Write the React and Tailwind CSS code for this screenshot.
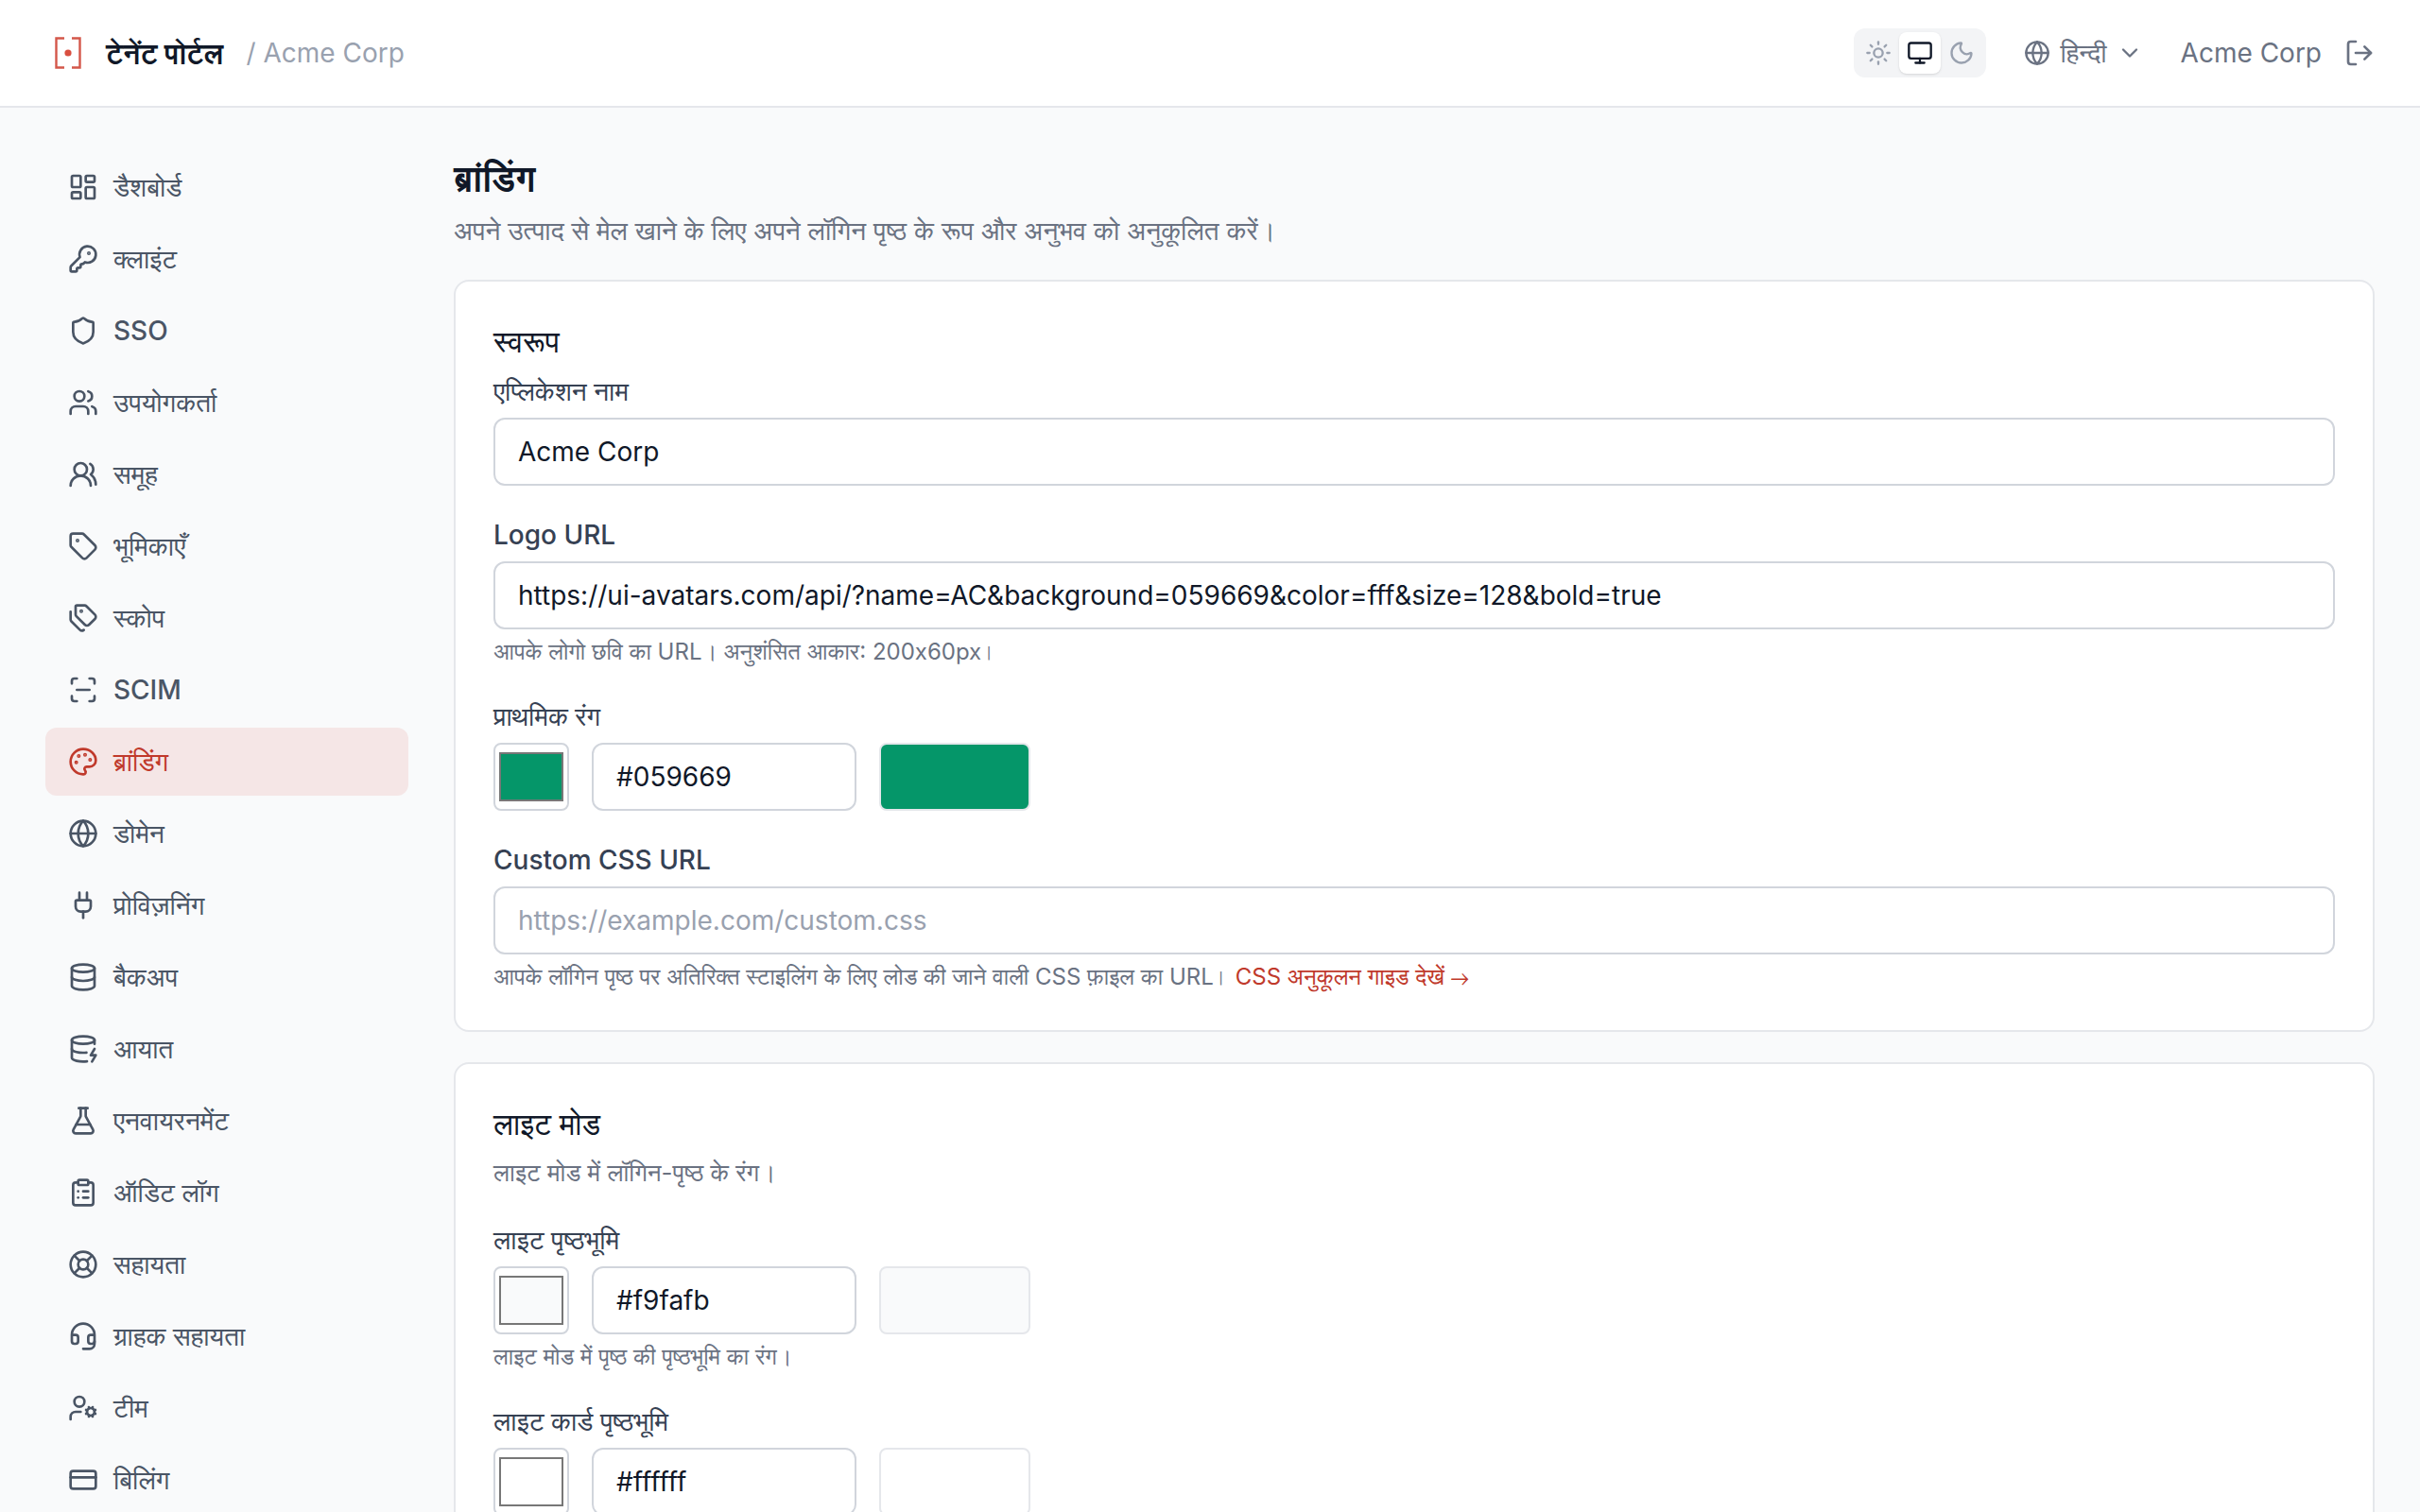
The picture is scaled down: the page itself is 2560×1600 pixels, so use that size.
import { useState } from "react";
import {
  ChevronDown,
  ClipboardList,
  CreditCard,
  Database,
  DatabaseZap,
  FlaskConical,
  Globe,
  Headset,
  KeyRound,
  LayoutDashboard,
  LifeBuoy,
  LogOut,
  Monitor,
  Moon,
  Palette,
  Plug,
  ScanLine,
  Shield,
  Sun,
  Tag,
  Tags,
  UserCog,
  Users,
  UsersRound,
} from "lucide-react";

const NAV = [
  { label: "डैशबोर्ड", icon: LayoutDashboard },
  { label: "क्लाइंट", icon: KeyRound },
  { label: "SSO", icon: Shield },
  { label: "उपयोगकर्ता", icon: Users },
  { label: "समूह", icon: UsersRound },
  { label: "भूमिकाएँ", icon: Tag },
  { label: "स्कोप", icon: Tags },
  { label: "SCIM", icon: ScanLine },
  { label: "ब्रांडिंग", icon: Palette },
  { label: "डोमेन", icon: Globe },
  { label: "प्रोविज़निंग", icon: Plug },
  { label: "बैकअप", icon: Database },
  { label: "आयात", icon: DatabaseZap },
  { label: "एनवायरनमेंट", icon: FlaskConical },
  { label: "ऑडिट लॉग", icon: ClipboardList },
  { label: "सहायता", icon: LifeBuoy },
  { label: "ग्राहक सहायता", icon: Headset },
  { label: "टीम", icon: UserCog },
  { label: "बिलिंग", icon: CreditCard },
];

const THEMES = [
  { id: "light", icon: Sun },
  { id: "system", icon: Monitor },
  { id: "dark", icon: Moon },
];

function Logo() {
  return (
    <svg viewBox="0 0 32 36" className="h-9 w-8" fill="none">
      <path d="M12 2.500H3.500v31H12M20 2.500h8.500v31H20" stroke="#d4574a" strokeWidth="2.400" />
      <circle cx="16" cy="18" r="3.600" fill="#d94f40" />
    </svg>
  );
}

function Header() {
  const [theme, setTheme] = useState("system");

  return (
    <header className="flex h-[114px] shrink-0 items-center justify-between border-b-2 border-gray-200 bg-white px-12">
      <div className="flex items-center">
        <div className="flex items-center gap-6 pl-2">
          <Logo />
          <span className="text-3xl leading-12 font-bold text-gray-900">टेनेंट पोर्टल</span>
        </div>
        <span className="pl-6 text-[28px] leading-10 text-gray-400">/ Acme Corp</span>
      </div>

      <div className="flex items-center">
        <div className="flex rounded-xl bg-gray-100 p-1">
          {THEMES.map(({ id, icon: Icon }) => (
            <button
              key={id}
              aria-label={id}
              onClick={() => setTheme(id)}
              className={
                theme === id
                  ? "rounded-lg bg-white p-2 text-gray-900 shadow-sm"
                  : "rounded-lg p-2 text-gray-400"
              }
            >
              <Icon size={28} />
            </button>
          ))}
        </div>
        <button className="ml-10 flex items-center gap-2.5 text-[28px] leading-10 text-gray-500">
          <Globe size={28} />
          <span>हिन्दी</span>
          <ChevronDown size={28} />
        </button>
        <span className="ml-10 text-[28px] leading-10 text-gray-500">Acme Corp</span>
        <button aria-label="लॉग आउट" className="ml-6 text-gray-500">
          <LogOut size={32} />
        </button>
      </div>
    </header>
  );
}

function Sidebar() {
  return (
    <nav className="flex w-96 shrink-0 flex-col gap-1">
      {NAV.map(({ label, icon: Icon }) => (
        <a
          key={label}
          href="#"
          className={
            label === "ब्रांडिंग"
              ? "flex h-[72px] shrink-0 items-center gap-4 rounded-xl bg-[#f5e6e6] px-6 text-[28px] leading-10 font-medium text-[#c0392b]"
              : "flex h-[72px] shrink-0 items-center gap-4 rounded-xl px-6 text-[28px] leading-10 font-medium text-gray-600"
          }
        >
          <Icon size={32} />
          {label}
        </a>
      ))}
    </nav>
  );
}

function Card({ title, children }) {
  return (
    <section className="shrink-0 rounded-2xl border-2 border-gray-200 bg-white p-10">
      <h2 className="mb-2 text-[32px] leading-12 font-medium text-gray-900">{title}</h2>
      {children}
    </section>
  );
}

function Field({ id, label, help, children }) {
  return (
    <div>
      <label htmlFor={id} className="mb-2 block h-10 text-[28px] leading-10 font-medium text-gray-700">
        {label}
      </label>
      {children}
      {help && <p className="mt-2 h-8 text-2xl leading-8 text-gray-500">{help}</p>}
    </div>
  );
}

function TextField({ id, label, help, initial = "", placeholder }) {
  const [value, setValue] = useState(initial);
  return (
    <Field id={id} label={label} help={help}>
      <input
        id={id}
        type="text"
        value={value}
        placeholder={placeholder}
        onChange={(e) => setValue(e.target.value)}
        className="block h-[72px] w-full rounded-xl border-2 border-gray-300 bg-white px-6 text-[28px] leading-10 text-gray-900 placeholder:text-gray-400"
      />
    </Field>
  );
}

function ColorField({ id, label, help, initial }) {
  const [value, setValue] = useState(initial);
  return (
    <Field id={id} label={label} help={help}>
      <div className="flex items-center gap-6">
        <input
          type="color"
          aria-label={label}
          value={value}
          onChange={(e) => setValue(e.target.value)}
          className="h-[72px] w-20 cursor-pointer rounded-lg border-2 border-gray-300 bg-white [&::-webkit-color-swatch-wrapper]:px-1 [&::-webkit-color-swatch-wrapper]:py-2 [&::-webkit-color-swatch]:border-2 [&::-webkit-color-swatch]:border-[#777777]"
        />
        <input
          id={id}
          type="text"
          value={value}
          onChange={(e) => setValue(e.target.value)}
          className="h-[72px] w-[280px] rounded-xl border-2 border-gray-300 bg-white px-6 text-[28px] leading-10 text-gray-900"
        />
        <div
          className="h-[72px] w-40 rounded-lg border-2 border-gray-200"
          style={{ backgroundColor: value }}
        />
      </div>
    </Field>
  );
}

export default function App() {
  return (
    <div className="flex h-screen flex-col overflow-hidden bg-gray-50 font-['Inter','FreeSans','Noto_Sans_Devanagari',sans-serif]">
      <Header />
      <div className="flex min-h-0 flex-1 gap-12 overflow-hidden px-12 pt-12">
        <Sidebar />
        <main className="flex min-w-0 flex-1 flex-col">
          <h1 className="text-[38px] leading-13 font-bold text-gray-900">ब्रांडिंग</h1>
          <p className="mt-2.5 mb-8 text-[28px] leading-10 text-gray-500">
            अपने उत्पाद से मेल खाने के लिए अपने लॉगिन पृष्ठ के रूप और अनुभव को अनुकूलित करें।
          </p>

          <div className="flex flex-col gap-8">
            <Card title="स्वरूप">
              <div className="flex flex-col gap-8">
                <TextField id="app-name" label="एप्लिकेशन नाम" initial="Acme Corp" />
                <TextField
                  id="logo-url"
                  label="Logo URL"
                  initial="https://ui-avatars.com/api/?name=AC&background=059669&color=fff&size=128&bold=true"
                  help="आपके लोगो छवि का URL। अनुशंसित आकार: 200x60px।"
                />
                <ColorField id="primary" label="प्राथमिक रंग" initial="#059669" />
                <TextField
                  id="css-url"
                  label="Custom CSS URL"
                  placeholder="https://example.com/custom.css"
                  help={
                    <>
                      आपके लॉगिन पृष्ठ पर अतिरिक्त स्टाइलिंग के लिए लोड की जाने वाली CSS फ़ाइल का URL।{" "}
                      <a href="#" className="text-[#c0392b]">
                        CSS अनुकूलन गाइड देखें <span className="font-['FreeSans',sans-serif]">→</span>
                      </a>
                    </>
                  }
                />
              </div>
            </Card>

            <Card title="लाइट मोड">
              <p className="mb-8 text-[26px] leading-[38px] text-gray-500">
                लाइट मोड में लॉगिन-पृष्ठ के रंग।
              </p>
              <div className="flex flex-col gap-8">
                <ColorField
                  id="light-bg"
                  label="लाइट पृष्ठभूमि"
                  initial="#f9fafb"
                  help="लाइट मोड में पृष्ठ की पृष्ठभूमि का रंग।"
                />
                <ColorField id="light-card" label="लाइट कार्ड पृष्ठभूमि" initial="#ffffff" />
              </div>
            </Card>
          </div>
        </main>
      </div>
    </div>
  );
}
